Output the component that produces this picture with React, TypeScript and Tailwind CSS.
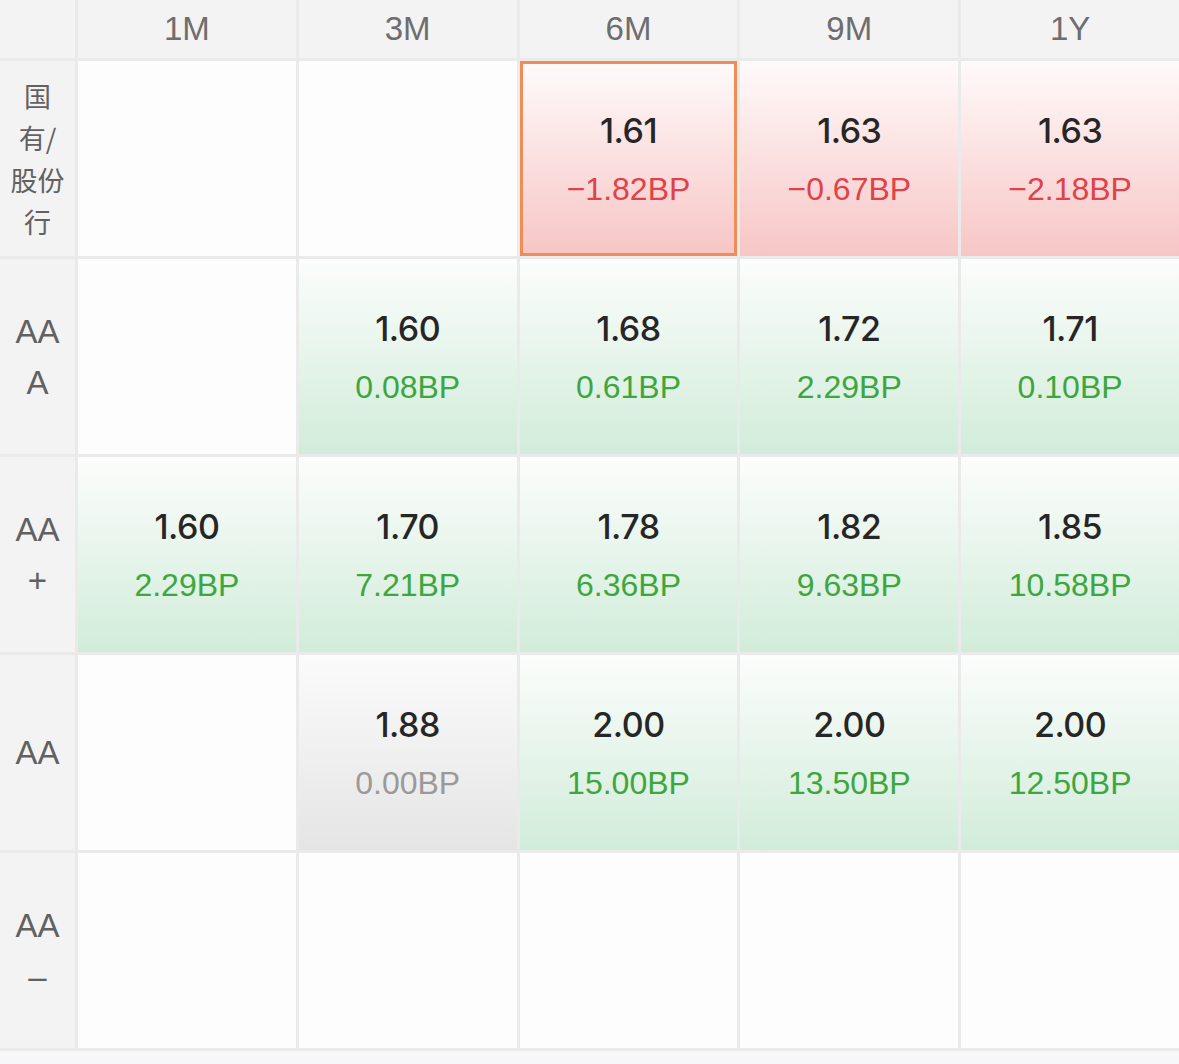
type Tone = "red" | "green" | "gray";
type Cell = { value: string; bp: string; tone: Tone; selected?: boolean } | null;

const terms = ["1M", "3M", "6M", "9M", "1Y"];

const rows: { label: string[]; cjk?: boolean; cells: Cell[] }[] = [
  {
    label: ["国", "有/", "股份", "行"],
    cjk: true,
    cells: [
      null,
      null,
      { value: "1.61", bp: "−1.82BP", tone: "red", selected: true },
      { value: "1.63", bp: "−0.67BP", tone: "red" },
      { value: "1.63", bp: "−2.18BP", tone: "red" },
    ],
  },
  {
    label: ["AA", "A"],
    cells: [
      null,
      { value: "1.60", bp: "0.08BP", tone: "green" },
      { value: "1.68", bp: "0.61BP", tone: "green" },
      { value: "1.72", bp: "2.29BP", tone: "green" },
      { value: "1.71", bp: "0.10BP", tone: "green" },
    ],
  },
  {
    label: ["AA", "+"],
    cells: [
      { value: "1.60", bp: "2.29BP", tone: "green" },
      { value: "1.70", bp: "7.21BP", tone: "green" },
      { value: "1.78", bp: "6.36BP", tone: "green" },
      { value: "1.82", bp: "9.63BP", tone: "green" },
      { value: "1.85", bp: "10.58BP", tone: "green" },
    ],
  },
  {
    label: ["AA"],
    cells: [
      null,
      { value: "1.88", bp: "0.00BP", tone: "gray" },
      { value: "2.00", bp: "15.00BP", tone: "green" },
      { value: "2.00", bp: "13.50BP", tone: "green" },
      { value: "2.00", bp: "12.50BP", tone: "green" },
    ],
  },
  {
    label: ["AA", "–"],
    cells: [null, null, null, null, null],
  },
];

const bgByTone: Record<Tone, string> = {
  red: "bg-gradient-to-b from-[#fefafa] to-[#f7c6c6]",
  green: "bg-gradient-to-b from-[#fcfdfc] to-[#d1ecda]",
  gray: "bg-gradient-to-b from-[#fbfbfb] to-[#e5e5e5]",
};

const textByTone: Record<Tone, string> = {
  red: "text-[#e0424a]",
  green: "text-[#3ea63e]",
  gray: "text-[#9a9a9a]",
};

function QuoteCell({ cell }: { cell: Cell }) {
  if (!cell) return <div className="bg-[#fdfdfd]" />;
  return (
    <div
      className={`flex flex-col items-center justify-center ${bgByTone[cell.tone]} ${
        cell.selected ? "border-[3px] border-[#ee8d55]" : ""
      }`}
    >
      <div className="font-['Inter','Liberation_Sans',sans-serif] text-[34px] font-medium leading-[40px] tracking-[-0.5px] text-[#262626]">
        {cell.value}
      </div>
      <div className={`mt-[20px] font-['Liberation_Sans',sans-serif] text-[32px] leading-[36px] ${textByTone[cell.tone]}`}>
        {cell.bp}
      </div>
    </div>
  );
}

export default function App() {
  return (
    <div className="min-h-screen bg-[#f7f7f9]">
      <div className="grid grid-cols-[75px_repeat(5,minmax(0,1fr))] grid-rows-[58px_repeat(5,195px)] gap-[3px] bg-[#eaeaea] pb-[3px]">
        <div className="bg-[#f3f3f3]" />
        {terms.map((t) => (
          <div
            key={t}
            className="flex items-center justify-center bg-[#f3f3f3] font-['Liberation_Sans',sans-serif] text-[33px] text-[#6e6e6e]"
          >
            {t}
          </div>
        ))}
        {rows.map((row, i) => (
          <>
            <div
              key={`l${i}`}
              className={`flex flex-col items-center justify-center bg-[#f3f3f3] text-[#616161] ${
                row.cjk
                  ? "font-['Noto_Sans_CJK_SC',sans-serif] text-[27px] leading-[42px]"
                  : "font-['Liberation_Sans',sans-serif] text-[33px] leading-[51px]"
              }`}
            >
              {row.label.map((l, j) => (
                <span key={j}>{l}</span>
              ))}
            </div>
            {row.cells.map((c, j) => (
              <QuoteCell key={`c${i}-${j}`} cell={c} />
            ))}
          </>
        ))}
      </div>
    </div>
  );
}
